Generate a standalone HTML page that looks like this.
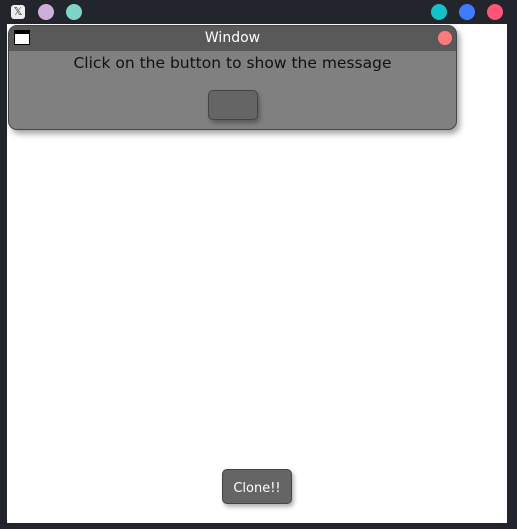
<!DOCTYPE html>
<html><head><meta charset="utf-8"><style>
*{margin:0;padding:0;box-sizing:border-box}
body{width:517px;height:529px;background:#22252b;position:relative;overflow:hidden;font-family:"DejaVu Sans","Liberation Sans",sans-serif}
.dot{position:absolute;width:16px;height:16px;border-radius:50%;top:4px}
#white{position:absolute;left:7px;top:24px;width:500px;height:499px;background:#fff}
#win{position:absolute;left:8px;top:25px;width:449px;height:105px;background:#808080;border-radius:9px;border:1px solid #444;box-shadow:3px 4px 6px rgba(0,0,0,.35);overflow:hidden}
#tb{height:25px;background:#595959;color:#fff;font-size:14px;text-align:center;line-height:24px}
#ico{position:absolute;left:5px;top:4px;width:16px;height:15px;background:#fff;border:1px solid #000;border-top-width:3px;box-shadow:inset 0 1px 0 #000}
#close{position:absolute;left:429px;top:5px;width:14px;height:14px;border-radius:50%;background:#ff7b7b}
#msg{text-align:center;font-size:15.5px;color:#111;margin-top:3px}
#btn{position:absolute;left:199px;top:64px;width:50px;height:30px;background:#656565;border:1px solid #444;border-radius:5px;box-shadow:2px 3px 4px rgba(0,0,0,.3)}
#clone{position:absolute;left:222px;top:469px;width:70px;height:35px;background:#656565;border:1px solid #444;border-radius:5px;color:#fff;font-size:13px;text-align:center;line-height:37px;box-shadow:2px 3px 4px rgba(0,0,0,.3)}
</style></head><body>
<div style="position:absolute;left:11px;top:5px;width:14px;height:14px;background:#eee;border-radius:3px;font-size:11px;line-height:14px;text-align:center;color:#333">𝕏</div>
<div class="dot" style="left:38px;background:#cfaedb"></div>
<div class="dot" style="left:66px;background:#7ed4c8"></div>
<div class="dot" style="left:431px;background:#17c0c8"></div>
<div class="dot" style="left:459px;background:#3f7bff"></div>
<div class="dot" style="left:487px;background:#ff5577"></div>
<div id="white"></div>
<div id="win">
<div id="tb">Window</div>
<div id="ico"></div>
<div id="close"></div>
<div id="msg">Click on the button to show the message</div>
<div id="btn"></div>
</div>
<div id="clone">Clone!!</div>
</body></html>
